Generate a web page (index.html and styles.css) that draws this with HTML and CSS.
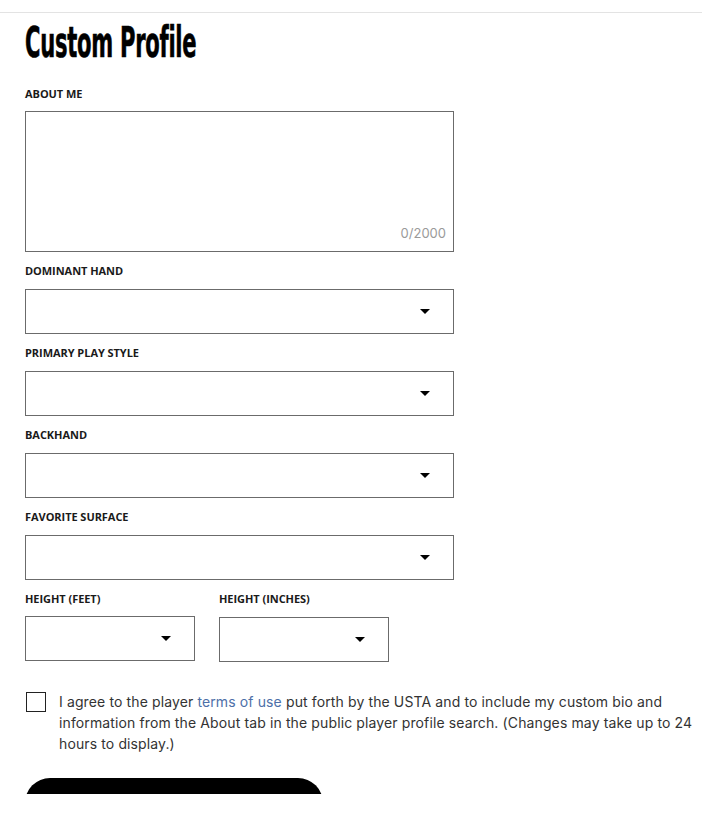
FILE: index.html
```html
<!DOCTYPE html>
<html lang="en">
<head>
<meta charset="utf-8">
<title>Custom Profile</title>
<link rel="stylesheet" href="styles.css">
</head>
<body>
<div class="page">
  <div class="content">
    <h1 class="title"><span class="title-text">Custom Profile</span></h1>

    <div class="field">
      <label class="label">ABOUT ME</label>
      <div class="textarea"><span class="counter">0/2000</span></div>
    </div>

    <div class="field">
      <label class="label">DOMINANT HAND</label>
      <div class="select"><span class="caret"></span></div>
    </div>

    <div class="field">
      <label class="label">PRIMARY PLAY STYLE</label>
      <div class="select"><span class="caret"></span></div>
    </div>

    <div class="field">
      <label class="label">BACKHAND</label>
      <div class="select"><span class="caret"></span></div>
    </div>

    <div class="field">
      <label class="label">FAVORITE SURFACE</label>
      <div class="select"><span class="caret"></span></div>
    </div>

    <div class="row">
      <div class="field half">
        <label class="label">HEIGHT (FEET)</label>
        <div class="select"><span class="caret"></span></div>
      </div>
      <div class="field half">
        <label class="label">HEIGHT (INCHES)</label>
        <div class="select"><span class="caret"></span></div>
      </div>
    </div>

    <div class="agree">
      <span class="checkbox"></span>
      <p class="agree-text">I agree to the player <a class="link" href="#">terms of use</a> put forth by the USTA and to include my custom bio and information from the About tab in the public player profile search. (Changes may take up to 24 hours to display.)</p>
    </div>

    <div class="button"></div>
  </div>
</div>
</body>
</html>
```

FILE: styles.css
```css
* { box-sizing: border-box; }
html, body { margin: 0; padding: 0; background: #fff; }
body { font-family: Inter, Roboto, "Liberation Sans", sans-serif; color: #111; }

.page {
  height: 794px;
  overflow: hidden;
  padding-top: 12px;
}
.content {
  border-top: 1px solid #e3e3e3;
  padding-left: 25px;
}

.title {
  margin: 0;
  height: 62px;
  padding-top: 4px;
  line-height: 50px;
  font-family: "DejaVu Sans", sans-serif;
  font-stretch: condensed;
  font-weight: 700;
  font-size: 43px;
  color: #000;
  white-space: nowrap;
  letter-spacing: -0.5px;
  -webkit-text-stroke: 0.6px #000;
}
.title-text {
  display: inline-block;
  transform: scaleX(0.545);
  transform-origin: left center;
}

.field { display: flex; flex-direction: column; margin-top: 12px; width: 429px; }
.label {
  font-family: "Open Sans", "Liberation Sans", sans-serif;
  font-size: 11px;
  font-weight: 700;
  line-height: 14px;
  height: 14px;
  color: #1a1a1a;
  margin-bottom: 11px;
  letter-spacing: -0.05px;
}
.field:first-of-type .label { margin-bottom: 10px; }

.textarea {
  height: 141px;
  border: 1px solid #6b6b6b;
  display: flex;
  justify-content: flex-end;
  align-items: flex-end;
  padding: 0 7px 10px 0;
}
.counter {
  font-size: 13px;
  color: #9a9a9a;
  line-height: 16px;
}

.select {
  height: 45px;
  border: 1px solid #6b6b6b;
  display: flex;
  justify-content: flex-end;
  align-items: center;
  padding-right: 23px;
}
.caret {
  width: 0;
  height: 0;
  border-left: 5px solid transparent;
  border-right: 5px solid transparent;
  border-top: 5px solid #000;
}

.row { display: flex; gap: 24px; }
.half { width: 170px; }

.agree {
  display: flex;
  align-items: flex-start;
  margin-top: 29px;
  gap: 13px;
}
.checkbox {
  flex: none;
  width: 20px;
  height: 20px;
  border: 1.5px solid #222;
  margin-top: 1px;
  margin-left: 1px;
}
.agree-text {
  margin: 0;
  width: 643px;
  font-size: 14px;
  line-height: 21px;
  color: #333;
  letter-spacing: 0.12px;
}
.link { color: #4d6fa8; text-decoration: none; }

.button {
  margin-top: 24px;
  width: 298px;
  height: 50px;
  border-radius: 25px;
  background: #000;
}
```
